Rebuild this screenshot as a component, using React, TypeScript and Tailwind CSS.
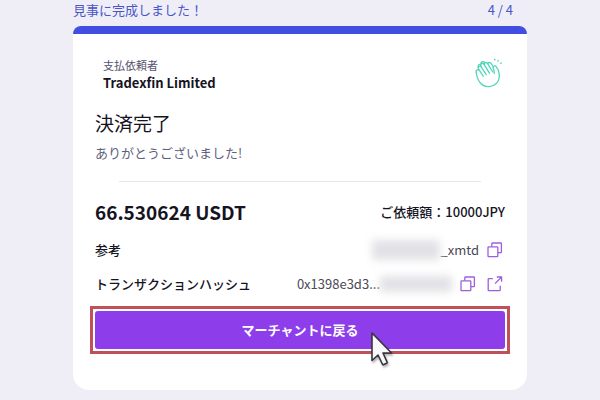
import type { ReactNode } from 'react';

function CopyIcon() {
  return (
    <svg className="h-4 w-4" viewBox="0 0 16 16" fill="none" stroke="currentColor" strokeWidth={1.3} strokeLinejoin="round">
      <rect x="1" y="4.8" width="9.8" height="9.8" rx="0.6" />
      <path d="M4.8 4.6V1.6c0-.4.2-.6.6-.6h8.4c.4 0 .6.2.6.6V10c0 .4-.2.6-.6.6H11" />
    </svg>
  );
}

function ExternalIcon() {
  return (
    <svg className="h-4 w-4" viewBox="0 0 16 16" fill="none" stroke="currentColor" strokeWidth={1.3} strokeLinejoin="round">
      <path d="M5.8 2.6H1.8c-.4 0-.6.2-.6.6V14c0 .4.2.6.6.6h10.8c.4 0 .6-.2.6-.6V9.8" />
      <path d="M8 7.6l6.4-6.4M9.8 1h4.8v4.8" />
    </svg>
  );
}

function ClapIcon() {
  return (
    <svg className="h-8 w-8" viewBox="0 0 32 32" fill="none" stroke="#4fd6bb" strokeWidth={1.3} strokeLinecap="round" strokeLinejoin="round">
      <path d="M3.2 15c.4 4.2 1.6 8 4.3 11 2.2 2.6 5.2 3.8 8.6 3.6 5.6-.3 9.6-4.2 10.2-9.4.3-3.8-.8-7.5-3-10.4-1.3-1.6-3.5-.8-3.2 1.2.5 1.8 1.3 3 1.2 5.4" />
      <path d="M3.2 15c-.4-2.2 2-3.2 3.4-1.3l3.6 5.5" />
      <path d="M6.3 13.3l-.9-1.6c-1-2.2 1.8-3.6 3-1.7l4.8 7.6" />
      <path d="M8.4 10l-.6-1.1c-.9-2.2 2-3.5 3.2-1.6l5.5 8.9" />
      <path d="M11.4 7.8c-.6-2.2 2-3.1 3.2-1.2l5.2 8.4" />
      <path d="M5.3 10.6c-.8-2.4.8-3.7 2.6-3.2M7.8 7.3c0-2.5 2.4-3.2 4-1.8" />
      <path d="M14.6 6.6c1.6-2 3.2-.8 3.8.2l2 3.2" />
      <path d="M21.6 2.3l.4.6M25.2 3.6l-.3.6M28.3 6l-.6.4" />
    </svg>
  );
}

function IconButton({ label, children }: { label: string; children: ReactNode }) {
  return (
    <button type="button" aria-label={label} className="text-[#9a5fe0]">
      {children}
    </button>
  );
}

function Cursor() {
  return (
    <svg
      className="pointer-events-none absolute top-[22px] left-[67%] h-9 w-6 drop-shadow-[1px_2px_1px_rgba(0,0,0,0.3)]"
      viewBox="0 0 24 36"
    >
      <path d="M2 2v27.5l6-5.5 4.4 9c.3.7.8.8 1.4.5l2.7-1.2c.6-.3.8-.8.5-1.4L13 22h8.5z" fill="#f8f7fa" stroke="#37363f" strokeWidth={1.6} strokeLinejoin="round" />
    </svg>
  );
}

export default function App() {
  return (
    <div className="min-h-screen bg-[#efeef7] px-4 pb-2 font-['Noto_Sans_CJK_JP',sans-serif] text-[13px] leading-5 text-[#15141f]">
      <main className="mx-auto w-full max-w-[454px]">
        <div className="flex h-[26px] justify-between pr-[14px] text-[#4a55c8]">
          <p>見事に完成しました！</p>
          <p>4 / 4</p>
        </div>

        <div className="overflow-hidden rounded-t-lg rounded-b-2xl bg-white">
          <div className="h-2 bg-[#414ee0]" />

          <div className="px-[22px] pt-[23px] pb-9">
            {/* Merchant */}
            <div className="flex items-start justify-between pl-2">
              <div>
                <p className="text-[11px] leading-4 text-[#55516f]">支払依頼者</p>
                <p className="font-bold">Tradexfin Limited</p>
              </div>
              <ClapIcon />
            </div>

            <h1 className="mt-4 text-[19px] leading-7">決済完了</h1>
            <p className="mt-1.5 text-[#625f7c]">ありがとうございました!</p>

            <hr className="mx-6 mt-[18px] border-[#e7e6ec]" />

            {/* Payment details */}
            <div className="mt-4 flex items-center justify-between">
              <p className="text-[19px] leading-7 font-bold">66.530624 USDT</p>
              <p className="font-medium">ご依頼額：10000JPY</p>
            </div>
            <div className="mt-[14px] flex items-center justify-between">
              <p className="font-medium">参考</p>
              <div className="flex items-center pr-0.5 text-[#4b4a57]">
                <span className="h-5 w-[68px] bg-[#e2e1e5] blur-[4px]" />
                <span className="mr-2">_xmtd</span>
                <IconButton label="参考をコピー">
                  <CopyIcon />
                </IconButton>
              </div>
            </div>
            <div className="mt-[14px] flex items-center justify-between">
              <p className="font-medium">トランザクションハッシュ</p>
              <div className="flex items-center pr-0.5 text-[#4b4a57]">
                <span>0x1398e3d3...</span>
                <span className="mr-2 h-4 w-[72px] bg-[#e2e1e5] blur-[4px]" />
                <div className="flex gap-[11px]">
                  <IconButton label="ハッシュをコピー">
                    <CopyIcon />
                  </IconButton>
                  <IconButton label="エクスプローラーで開く">
                    <ExternalIcon />
                  </IconButton>
                </div>
              </div>
            </div>

            <div className="relative -mx-[5px] mt-3 border-3 border-[#c0505a] p-[2px]">
              <button type="button" className="h-[38px] w-full rounded-[3px] bg-[#8d3eea] font-bold text-white">
                マーチャントに戻る
              </button>
              <Cursor />
            </div>
          </div>
        </div>
      </main>
    </div>
  );
}
